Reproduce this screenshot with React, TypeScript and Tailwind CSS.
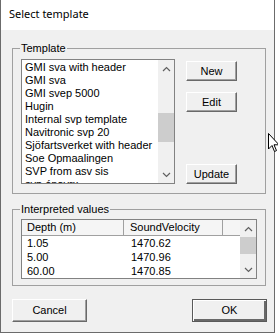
import React from "react";

const templates = [
  "GMI sva with header",
  "GMI sva",
  "GMI svep 5000",
  "Hugin",
  "Internal svp template",
  "Navitronic svp 20",
  "Sjöfartsverket with header",
  "Soe Opmaalingen",
  "SVP from asv sis",
  "svp ónavrx",
];

const values = [
  ["1.05", "1470.62"],
  ["5.00", "1470.96"],
  ["60.00", "1470.85"],
];

const Chevron = ({ up }: { up?: boolean }) => (
  <svg width="9" height="6" viewBox="0 0 9 6">
    <polyline
      points={up ? "1,5 4.5,1.5 8,5" : "1,1 4.5,4.5 8,1"}
      fill="none"
      stroke="#606060"
      strokeWidth="1.2"
    />
  </svg>
);

const ScrollBar = ({ thumbTop, thumbH }: { thumbTop: number; thumbH: number }) => (
  <div className="w-[16px] h-full bg-[#f0f0f0] flex flex-col items-center">
    <div className="h-[17px] w-full flex items-center justify-center">
      <Chevron up />
    </div>
    <div className="flex-1 w-full relative">
      <div
        className="absolute left-0 right-0 bg-[#cdcdcd]"
        style={{ top: thumbTop, height: thumbH }}
      />
    </div>
    <div className="h-[17px] w-full flex items-center justify-center">
      <Chevron />
    </div>
  </div>
);

const WinButton = ({
  label,
  className = "",
  isDefault,
}: {
  label: string;
  className?: string;
  isDefault?: boolean;
}) => (
  <button
    className={
      "bg-[#f0f0f0] text-black text-[11px] leading-none flex items-center justify-center " +
      (isDefault
        ? "border border-[#5a5a5a] shadow-[inset_1px_1px_0_#ffffff,inset_-2px_-2px_0_#696969] "
        : "border border-t-white border-l-white border-r-[#696969] border-b-[#696969] shadow-[inset_-1px_-1px_0_#a0a0a0] ") +
      className
    }
  >
    {label}
  </button>
);

export default function App() {
  return (
    <div className="w-[278px] h-[334px] bg-white relative font-['Liberation_Sans',Arial,sans-serif] text-black">
      <div className="w-[275px] h-[333px] border-x border-b border-[#6b6b6b] flex flex-col">
        <div className="h-[30px] bg-white flex items-center pl-[8px] font-['Noto_Sans',sans-serif] text-[11px] pb-[1px]">
          Select template
        </div>
        <div className="flex-1 bg-[#f0f0f0] flex flex-col">
          <fieldset className="ml-[11px] mt-[12px] w-[254px] border border-[#a0a0a0] pl-[8px] pt-[4px] pb-[9px]">
            <legend className="text-[11px] leading-[13px] px-[1px] -ml-[1px]">Template</legend>
            <div className="flex">
              <div className="w-[154px] h-[125px] border border-[#828282] bg-white flex">
                <div className="flex-1 overflow-hidden pt-[1px] pl-[3px]">
                  {templates.map((t) => (
                    <div key={t} className="h-[13px] text-[11px] leading-[13px] whitespace-nowrap">
                      {t}
                    </div>
                  ))}
                </div>
                <ScrollBar thumbTop={36} thumbH={29} />
              </div>
              <div className="ml-[11px] flex flex-col pt-[2px]">
                <WinButton label="New" className="w-[51px] h-[20px]" />
                <WinButton label="Edit" className="w-[51px] h-[20px] mt-[11px]" />
                <WinButton label="Update" className="w-[51px] h-[20px] mt-auto" />
              </div>
            </div>
          </fieldset>

          <fieldset className="ml-[11px] mt-[9px] w-[254px] border border-[#a0a0a0] pl-[8px] pt-[3px] pb-[6px]">
            <legend className="text-[11px] leading-[13px] px-[1px] -ml-[1px]">Interpreted values</legend>
            <div className="w-[236px] h-[60px] border border-[#828282] bg-white flex">
              <div className="flex-1 flex flex-col">
                <div className="h-[16px] flex text-[11px] bg-[#f5f5f5] border-b border-[#a0a0a0]">
                  <div className="w-[102px] pl-[5px] flex items-center border-r border-[#a0a0a0]">Depth (m)</div>
                  <div className="w-[99px] pl-[6px] flex items-center border-r border-[#a0a0a0]">SoundVelocity</div>
                  <div className="flex-1" />
                </div>
                {values.map(([d, v]) => (
                  <div key={d} className="h-[14px] flex text-[11px] leading-[14px]">
                    <div className="w-[102px] pl-[5px]">{d}</div>
                    <div className="w-[99px] pl-[7px]">{v}</div>
                  </div>
                ))}
              </div>
              <ScrollBar thumbTop={0} thumbH={17} />
            </div>
          </fieldset>

          <div className="mt-[13px] pl-[11px] pr-[7px] flex justify-between">
            <WinButton label="Cancel" className="w-[75px] h-[23px]" />
            <WinButton label="OK" className="w-[75px] h-[23px]" isDefault />
          </div>
        </div>
      </div>

      <svg className="absolute left-[268px] top-[133px]" width="12" height="20" viewBox="0 0 12 20">
        <path
          d="M0.5 0.5 L0.5 16 L4 12.5 L6.5 18.5 L8.5 17.6 L6 11.8 L11 11.8 Z"
          fill="white"
          stroke="black"
          strokeWidth="1"
          strokeLinejoin="miter"
        />
      </svg>
    </div>
  );
}
